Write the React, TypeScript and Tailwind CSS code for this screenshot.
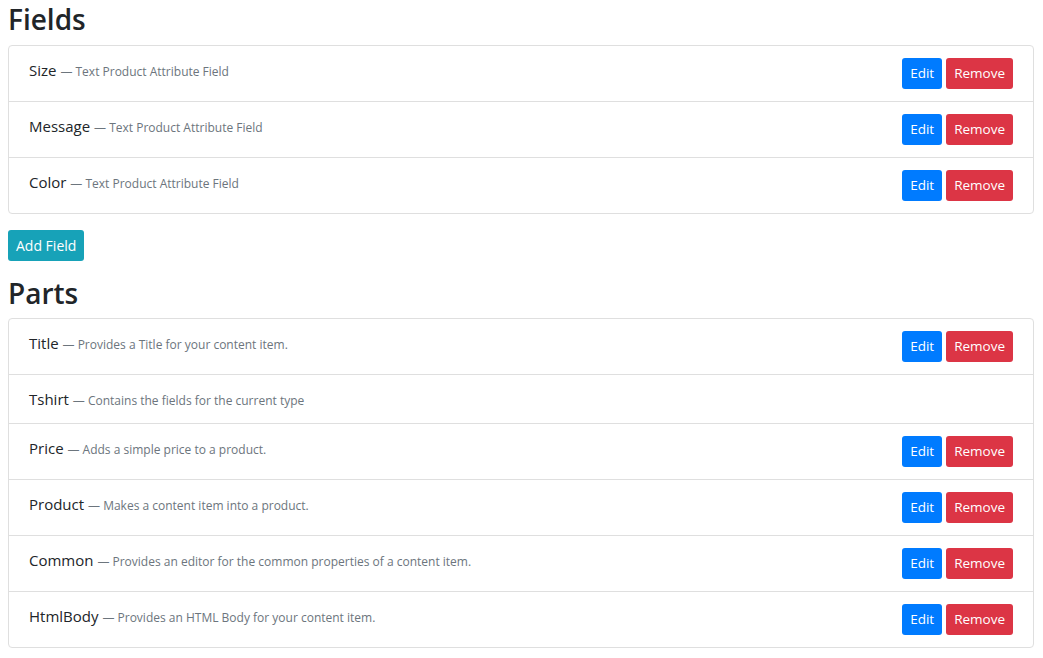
const fields = [
  { name: "Size", desc: "Text Product Attribute Field", actions: true },
  { name: "Message", desc: "Text Product Attribute Field", actions: true },
  { name: "Color", desc: "Text Product Attribute Field", actions: true },
];

const parts = [
  { name: "Title", desc: "Provides a Title for your content item.", actions: true },
  { name: "Tshirt", desc: "Contains the fields for the current type", actions: false },
  { name: "Price", desc: "Adds a simple price to a product.", actions: true },
  { name: "Product", desc: "Makes a content item into a product.", actions: true },
  { name: "Common", desc: "Provides an editor for the common properties of a content item.", actions: true },
  { name: "HtmlBody", desc: "Provides an HTML Body for your content item.", actions: true },
];

type Item = { name: string; desc: string; actions: boolean };

function ItemList({ items }: { items: Item[] }) {
  return (
    <ul className="border border-[#dfdfdf] rounded-[4px] bg-white">
      {items.map((item, i) => (
        <li
          key={item.name}
          className={
            "flex items-start justify-between px-5 py-3 " +
            (i > 0 ? "border-t border-[#dfdfdf]" : "")
          }
        >
          <div className="h-6 text-[15px] leading-6 text-[#212529]">
            {item.name}{" "}
            <span className="text-[12px] leading-none text-[#6c757d]">— {item.desc}</span>
          </div>
          {item.actions && (
            <div className="flex gap-1">
              <button className="h-[31px] px-2 rounded-[3px] bg-[#007bff] text-white text-[13.5px] leading-[21px]">
                Edit
              </button>
              <button className="h-[31px] px-2 rounded-[3px] bg-[#dc3545] text-white text-[13.5px] leading-[21px]">
                Remove
              </button>
            </div>
          )}
        </li>
      ))}
    </ul>
  );
}

export default function App() {
  return (
    <div
      className="bg-white min-h-screen pl-2 pr-[9px] pt-[3px] text-[#212529]"
      style={{ fontFamily: '"Open Sans", "Noto Sans", sans-serif' }}
    >
      <h2 className="text-[28px] leading-[1.2] font-semibold mb-2">Fields</h2>
      <ItemList items={fields} />
      <button className="mt-4 h-[31px] px-2 rounded-[3px] bg-[#17a2b8] text-white text-[14px] leading-[21px]">
        Add Field
      </button>
      <h2 className="mt-4 text-[28px] leading-[1.2] font-semibold mb-2">Parts</h2>
      <ItemList items={parts} />
    </div>
  );
}
